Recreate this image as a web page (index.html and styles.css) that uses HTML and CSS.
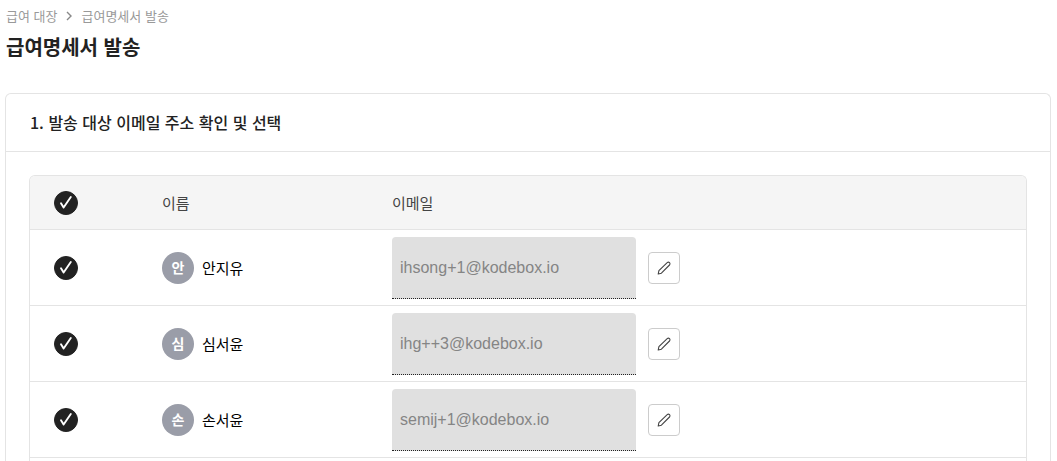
FILE: index.html
```html
<!DOCTYPE html>
<html lang="ko">
<head>
  <meta charset="UTF-8">
  <meta name="viewport" content="width=device-width, initial-scale=1.0">
  <title>급여명세서 발송</title>
  <link rel="stylesheet" href="styles.css">
</head>
<body>
  <!-- Shared icons -->
  <svg class="icon-defs" aria-hidden="true">
    <symbol id="icon-check" viewBox="0 0 24 24">
      <path d="M7 12.2l2.6 4.3L16.8 6" fill="none" stroke="#fff" stroke-width="1.9" stroke-linecap="round" stroke-linejoin="round"/>
    </symbol>
    <symbol id="icon-pencil" viewBox="0 0 16 16">
      <path d="M2.2 14l.7-3.3 8.3-8a1.6 1.6 0 0 1 2.3 2.3l-8.1 8.2z" fill="none" stroke="#444" stroke-width="1.1" stroke-linejoin="round"/>
    </symbol>
  </svg>

  <main class="page">
    <nav class="breadcrumb">
      <a href="#">급여 대장</a>
      <svg class="breadcrumb-arrow" viewBox="0 0 8 10" aria-hidden="true">
        <path d="M2 1l4 4-4 4" fill="none" stroke="#888" stroke-width="1.4"/>
      </svg>
      <a href="#">급여명세서 발송</a>
    </nav>
    <h1>급여명세서 발송</h1>

    <section class="card">
      <h2>1. 발송 대상 이메일 주소 확인 및 선택</h2>

      <div class="card-body">
        <div class="table-wrap">
          <table>
            <thead>
              <tr>
                <th class="col-check">
                  <label class="check"><input type="checkbox" checked aria-label="전체 선택"><svg><use href="#icon-check"/></svg></label>
                </th>
                <th class="col-name">이름</th>
                <th>이메일</th>
              </tr>
            </thead>
            <tbody>
              <tr>
                <td><label class="check"><input type="checkbox" checked aria-label="안지유 선택"><svg><use href="#icon-check"/></svg></label></td>
                <td><div class="person"><span class="avatar">안</span>안지유</div></td>
                <td>
                  <div class="email">
                    <input type="email" value="ihsong+1@kodebox.io" aria-label="안지유 이메일" disabled>
                    <button type="button" aria-label="수정"><svg><use href="#icon-pencil"/></svg></button>
                  </div>
                </td>
              </tr>
              <tr>
                <td><label class="check"><input type="checkbox" checked aria-label="심서윤 선택"><svg><use href="#icon-check"/></svg></label></td>
                <td><div class="person"><span class="avatar">심</span>심서윤</div></td>
                <td>
                  <div class="email">
                    <input type="email" value="ihg++3@kodebox.io" aria-label="심서윤 이메일" disabled>
                    <button type="button" aria-label="수정"><svg><use href="#icon-pencil"/></svg></button>
                  </div>
                </td>
              </tr>
              <tr>
                <td><label class="check"><input type="checkbox" checked aria-label="손서윤 선택"><svg><use href="#icon-check"/></svg></label></td>
                <td><div class="person"><span class="avatar">손</span>손서윤</div></td>
                <td>
                  <div class="email">
                    <input type="email" value="semij+1@kodebox.io" aria-label="손서윤 이메일" disabled>
                    <button type="button" aria-label="수정"><svg><use href="#icon-pencil"/></svg></button>
                  </div>
                </td>
              </tr>
            </tbody>
          </table>
        </div>
      </div>
    </section>
  </main>
</body>
</html>
```
FILE: styles.css
```css
/* Base styles */
* {
  box-sizing: border-box;
}

body {
  margin: 0;
  background: #fff;
  color: #222;
  font-family: "Noto Sans CJK KR", sans-serif;
}

.icon-defs {
  display: none;
}

.page {
  display: flex;
  flex-direction: column;
  min-height: 100vh;
  padding: 5px 6px 0 5px;
}

/* Page heading */
.breadcrumb {
  display: flex;
  align-items: center;
  gap: 8px;
  padding: 0 1px;
  font-size: 13px;
  line-height: 22px;
}

.breadcrumb a {
  color: #999;
  text-decoration: none;
}

.breadcrumb-arrow {
  width: 8px;
  height: 10px;
}

h1 {
  margin: 5px 0 31px;
  padding: 0 1px;
  font-size: 20px;
  font-weight: 700;
  line-height: 30px;
}

/* Card */
.card {
  display: flex;
  flex: 1;
  flex-direction: column;
  border: 1px solid #e4e4e4;
  border-bottom: 0;
  border-radius: 6px 6px 0 0;
}

h2 {
  margin: 0;
  padding: 16px 24px;
  border-bottom: 1px solid #e4e4e4;
  font-size: 16px;
  font-weight: 500;
  line-height: 25px;
}

.card-body {
  display: flex;
  flex: 1;
  flex-direction: column;
  padding: 23px 23px 0;
}

/* Table */
.table-wrap {
  flex: 1;
  overflow: hidden;
  border: 1px solid #e4e4e4;
  border-bottom: 0;
  border-radius: 6px 6px 0 0;
}

table {
  width: 100%;
  border-collapse: separate;
  border-spacing: 0;
  table-layout: fixed;
  font-size: 15px;
  line-height: 22px;
}

th,
td {
  padding: 0 24px;
  border-bottom: 1px solid #e4e4e4;
  text-align: left;
}

th {
  height: 54px;
  background: #f5f5f5;
  color: #444;
  font-weight: 400;
}

td {
  height: 76px;
  color: #000;
}

.col-check {
  width: 108px;
}

.col-name {
  width: 230px;
}

/* Round checkbox */
.check {
  display: grid;
  width: 24px;
  height: 24px;
}

.check input,
.check svg {
  grid-area: 1 / 1;
  width: 24px;
  height: 24px;
  margin: 0;
}

.check input {
  appearance: none;
  border: 1px solid #ccc;
  border-radius: 50%;
}

.check input:checked {
  border-color: #222;
  background: #222;
}

.check input:not(:checked) + svg {
  visibility: hidden;
}

.check svg {
  pointer-events: none;
}

/* Name and email cells */
.person {
  display: flex;
  align-items: center;
  gap: 8px;
  line-height: 20px;
}

.avatar {
  width: 32px;
  height: 32px;
  border-radius: 50%;
  background: #9a9da8;
  color: #fff;
  font-size: 14px;
  font-weight: 700;
  line-height: 30px;
  text-align: center;
}

.email {
  display: flex;
  align-items: center;
  gap: 12px;
}

.email input {
  width: 244px;
  height: 62px;
  padding: 2px 8px 0;
  border: 0;
  border-bottom: 1px dotted #222;
  border-radius: 4px 4px 0 0;
  background: #e0e0e0;
  color: #858585;
  font-family: "Liberation Sans", Arial, sans-serif;
  font-size: 16px;
}

.email button {
  display: flex;
  align-items: center;
  justify-content: center;
  width: 32px;
  height: 32px;
  padding: 0;
  border: 1px solid #ccc;
  border-radius: 4px;
  background: #fff;
  cursor: pointer;
}

.email button svg {
  width: 16px;
  height: 16px;
}
```
